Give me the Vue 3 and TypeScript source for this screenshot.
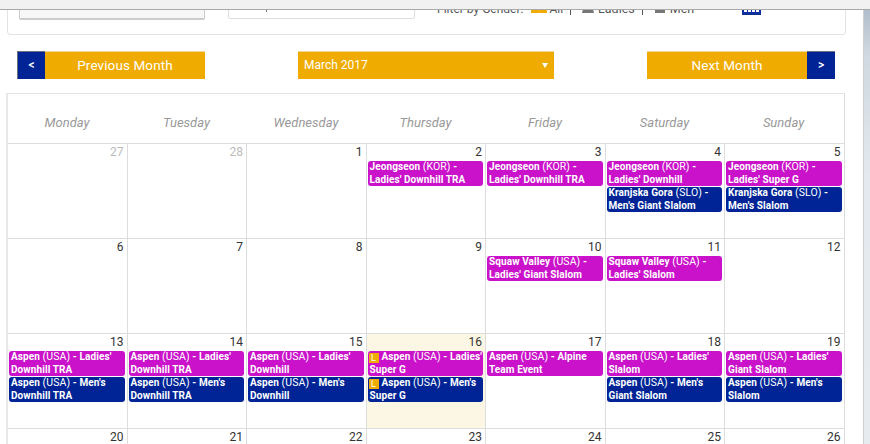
<script setup lang="ts">
interface CalEvent {
  place: string
  nation: string
  race: string
  kind: 'ladies' | 'men'
  live?: boolean
}
interface Day {
  n: number
  muted?: boolean
  today?: boolean
  events?: CalEvent[]
}

const weekdays: string[] = ['Monday', 'Tuesday', 'Wednesday', 'Thursday', 'Friday', 'Saturday', 'Sunday']

const ev = (place: string, nation: string, race: string, kind: 'ladies' | 'men', live = false): CalEvent => ({
  place,
  nation,
  race,
  kind,
  live
})

const days: Day[] = [
  { n: 27, muted: true },
  { n: 28, muted: true },
  { n: 1 },
  { n: 2, events: [ev('Jeongseon', 'KOR', "Ladies' Downhill TRA", 'ladies')] },
  { n: 3, events: [ev('Jeongseon', 'KOR', "Ladies' Downhill TRA", 'ladies')] },
  {
    n: 4,
    events: [
      ev('Jeongseon', 'KOR', "Ladies' Downhill", 'ladies'),
      ev('Kranjska Gora', 'SLO', "Men's Giant Slalom", 'men')
    ]
  },
  {
    n: 5,
    events: [
      ev('Jeongseon', 'KOR', "Ladies' Super G", 'ladies'),
      ev('Kranjska Gora', 'SLO', "Men's Slalom", 'men')
    ]
  },
  { n: 6 },
  { n: 7 },
  { n: 8 },
  { n: 9 },
  { n: 10, events: [ev('Squaw Valley', 'USA', "Ladies' Giant Slalom", 'ladies')] },
  { n: 11, events: [ev('Squaw Valley', 'USA', "Ladies' Slalom", 'ladies')] },
  { n: 12 },
  {
    n: 13,
    events: [
      ev('Aspen', 'USA', "Ladies' Downhill TRA", 'ladies'),
      ev('Aspen', 'USA', "Men's Downhill TRA", 'men')
    ]
  },
  {
    n: 14,
    events: [
      ev('Aspen', 'USA', "Ladies' Downhill TRA", 'ladies'),
      ev('Aspen', 'USA', "Men's Downhill TRA", 'men')
    ]
  },
  {
    n: 15,
    events: [
      ev('Aspen', 'USA', "Ladies' Downhill", 'ladies'),
      ev('Aspen', 'USA', "Men's Downhill", 'men')
    ]
  },
  {
    n: 16,
    today: true,
    events: [
      ev('Aspen', 'USA', "Ladies' Super G", 'ladies', true),
      ev('Aspen', 'USA', "Men's Super G", 'men', true)
    ]
  },
  { n: 17, events: [ev('Aspen', 'USA', 'Alpine Team Event', 'ladies')] },
  {
    n: 18,
    events: [
      ev('Aspen', 'USA', "Ladies' Slalom", 'ladies'),
      ev('Aspen', 'USA', "Men's Giant Slalom", 'men')
    ]
  },
  {
    n: 19,
    events: [
      ev('Aspen', 'USA', "Ladies' Giant Slalom", 'ladies'),
      ev('Aspen', 'USA', "Men's Slalom", 'men')
    ]
  },
  { n: 20 },
  { n: 21 },
  { n: 22 },
  { n: 23 },
  { n: 24 },
  { n: 25 },
  { n: 26 }
]
</script>

<template>
  <div class="window">
    <div class="chrome"></div>
    <main class="page">
      <section class="filters">
        <div class="search-box"></div>
        <div class="text-box"><span class="tick"></span></div>
        <div class="gender">
          <span class="gender-label">Filter by Gender:</span>
          <svg class="icon-all" width="16" height="16" viewBox="0 0 16 16" aria-hidden="true">
            <path d="M1 0h6l1 16H0zM9 0h6l1 16H8z" fill="#f0ab00" />
          </svg>
          <span>All</span>
          <span class="sep"></span>
          <svg class="icon-one" width="12" height="16" viewBox="0 0 12 16" aria-hidden="true">
            <path d="M4 0h4l4 16H0z" fill="#777" />
          </svg>
          <span class="opt">Ladies</span>
          <span class="sep"></span>
          <svg class="icon-one" width="12" height="16" viewBox="0 0 12 16" aria-hidden="true">
            <rect x="1" width="10" height="16" fill="#777" />
          </svg>
          <span class="opt">Men</span>
        </div>
        <svg class="cal-icon" width="19" height="15" viewBox="0 0 19 15" aria-hidden="true">
          <rect width="19" height="15" fill="#0f2f9c" />
          <g fill="#fff">
            <rect x="2" y="9" width="3" height="3" />
            <rect x="6" y="9" width="3" height="3" />
            <rect x="10" y="9" width="3" height="3" />
            <rect x="14" y="9" width="3" height="3" />
          </g>
        </svg>
      </section>

      <nav class="month-nav">
        <button class="nav-btn" type="button">
          <span class="arrow left">&lt;</span>
          <span class="nav-label">Previous Month</span>
        </button>
        <div class="month-select">
          <span>March 2017</span>
          <span class="caret"></span>
        </div>
        <button class="nav-btn" type="button">
          <span class="nav-label">Next Month</span>
          <span class="arrow right">&gt;</span>
        </button>
      </nav>

      <section class="calendar">
        <div v-for="w in weekdays" :key="w" class="weekday">{{ w }}</div>
        <div v-for="d in days" :key="d.n + (d.muted ? 'm' : '')" class="day" :class="{ today: d.today }">
          <div class="num" :class="{ muted: d.muted }">{{ d.n }}</div>
          <div v-for="(e, i) in d.events" :key="i" class="event" :class="e.kind">
            <span v-if="e.live" class="live">L</span>
            <b>{{ e.place }}</b> <span class="nation">({{ e.nation }})</span> <b>- {{ e.race }}</b>
          </div>
        </div>
      </section>
    </main>
    <div class="strip"></div>
  </div>
</template>

<style>
html,
body {
  margin: 0;
  background: #fff;
}
</style>

<style scoped>
.window {
  position: relative;
  display: flex;
  width: 870px;
  height: 444px;
  overflow: hidden;
  background: #fff;
  font-family: Roboto, "Liberation Sans", sans-serif;
}
.chrome {
  position: absolute;
  top: 0;
  left: 0;
  right: 0;
  height: 9px;
  background: #f1f1f1;
  border-bottom: 1px solid #a9a9a9;
  z-index: 2;
}
.page {
  width: 863px;
  flex: none;
  padding-top: 9px;
  box-sizing: border-box;
}
.strip {
  flex: 1;
  border-left: 1px solid #cfcfcf;
  background: linear-gradient(#a9b7c6 0, #cfd8e0 12%, #e3e9ee 40%, #e6ebef 100%);
}
.filters {
  display: flex;
  align-items: flex-end;
  box-sizing: border-box;
  width: 839px;
  height: 26px;
  margin-left: 7px;
  border: 1px solid #e3e3e3;
  border-top: 0;
  border-radius: 0 0 4px 4px;
}
.search-box {
  width: 186px;
  height: 20px;
  margin: 0 0 14px 11px;
  box-sizing: border-box;
  background: #f7f7f7;
  border: 1px solid #ccc;
  border-bottom-width: 2px;
  border-radius: 0 0 2px 2px;
}
.text-box {
  position: relative;
  width: 187px;
  height: 20px;
  margin: 0 0 15px 23px;
  box-sizing: border-box;
  border: 1px solid #ddd;
  border-radius: 0 0 2px 2px;
}
.tick {
  position: absolute;
  left: 37px;
  bottom: 6px;
  width: 1px;
  height: 8px;
  background: #777;
}
.gender {
  display: flex;
  align-items: center;
  height: 16px;
  margin: 0 0 17px 22px;
  font-size: 12px;
  line-height: 16px;
  color: #555;
}
.gender-label {
  margin-right: 8px;
}
.opt {
  font-size: 12.5px;
}
.icon-all {
  display: block;
  margin: 0 2px 8px 0;
}
.icon-one {
  display: block;
  margin: 0 4px 8px 0;
}
.sep {
  width: 1px;
  height: 16px;
  margin: 0 11px 4px 7px;
  background: #555;
}
.cal-icon {
  display: block;
  margin: 0 0 19px 48px;
}
.month-nav {
  display: flex;
  justify-content: space-between;
  width: 818px;
  margin: 16px 0 0 17px;
}
.nav-btn {
  display: flex;
  width: 188px;
  height: 28px;
  padding: 0;
  border: 0;
  border-top: 1px solid #f5d79a;
  box-sizing: border-box;
  background: #f0ab00;
  color: #fff;
  font-family: inherit;
  font-size: 13.5px;
  letter-spacing: 0.1px;
  line-height: 27px;
}
.nav-label {
  flex: 1;
  text-align: center;
}
.arrow {
  width: 28px;
  margin-top: -1px;
  height: 28px;
  box-sizing: border-box;
  background: #002496;
  border-top: 1px solid #6b6f80;
  font-size: 12px;
  font-weight: 500;
  line-height: 27px;
  letter-spacing: 0;
  text-align: center;
}
.arrow.left {
  border-left: 1px solid #6b6f80;
}
.month-select {
  display: flex;
  align-items: center;
  justify-content: space-between;
  width: 256px;
  height: 28px;
  padding: 0 6px 1px;
  box-sizing: border-box;
  background: #f0ab00;
  border-top: 1px solid #f5d79a;
  color: #fff;
  font-size: 12px;
}
.caret {
  width: 0;
  height: 0;
  border-left: 3px solid transparent;
  border-right: 3px solid transparent;
  border-top: 5px solid #fff;
}
.calendar {
  display: grid;
  grid-template-columns: repeat(7, 119.5px);
  grid-template-rows: 49px repeat(4, 95px);
  box-sizing: border-box;
  width: 839px;
  margin: 14px 0 0 6px;
  border-top: 1px solid #e4e4e4;
  border-left: 2px solid #e8e8e8;
}
.weekday {
  display: flex;
  align-items: center;
  justify-content: center;
  padding: 8px 1.5px 0 0;
  box-sizing: border-box;
  font-size: 13px;
  font-style: italic;
  color: #999;
}
.weekday:nth-child(7) {
  border-right: 1px solid #ddd;
}
.day {
  box-sizing: border-box;
  min-width: 0;
  padding: 1px 2px 0 1px;
  border-top: 1px solid #ddd;
  border-right: 1px solid #ddd;
}
.day.today {
  background: #fcf7e4;
}
.num {
  height: 16px;
  padding-right: 1px;
  font-size: 12px;
  line-height: 14px;
  text-align: right;
  color: #333;
}
.num.muted {
  color: #bbb;
}
.event {
  height: 25px;
  margin-bottom: 1px;
  padding: 0 0 0 2px;
  overflow: hidden;
  border-radius: 3px;
  color: #fff;
  font-size: 10px;
  letter-spacing: 0.1px;
  line-height: 12.5px;
}
.event b {
  font-weight: 700;
}
.nation {
  font-size: 10.5px;
}
.event.ladies {
  background: #c912c9;
}
.event.men {
  background: #002496;
}
.live {
  display: inline-block;
  width: 10px;
  height: 10px;
  margin: 0 3px 0 -1px;
  background: #f0ab00;
  font-size: 9px;
  line-height: 10px;
  text-align: center;
  vertical-align: -1px;
}
</style>
